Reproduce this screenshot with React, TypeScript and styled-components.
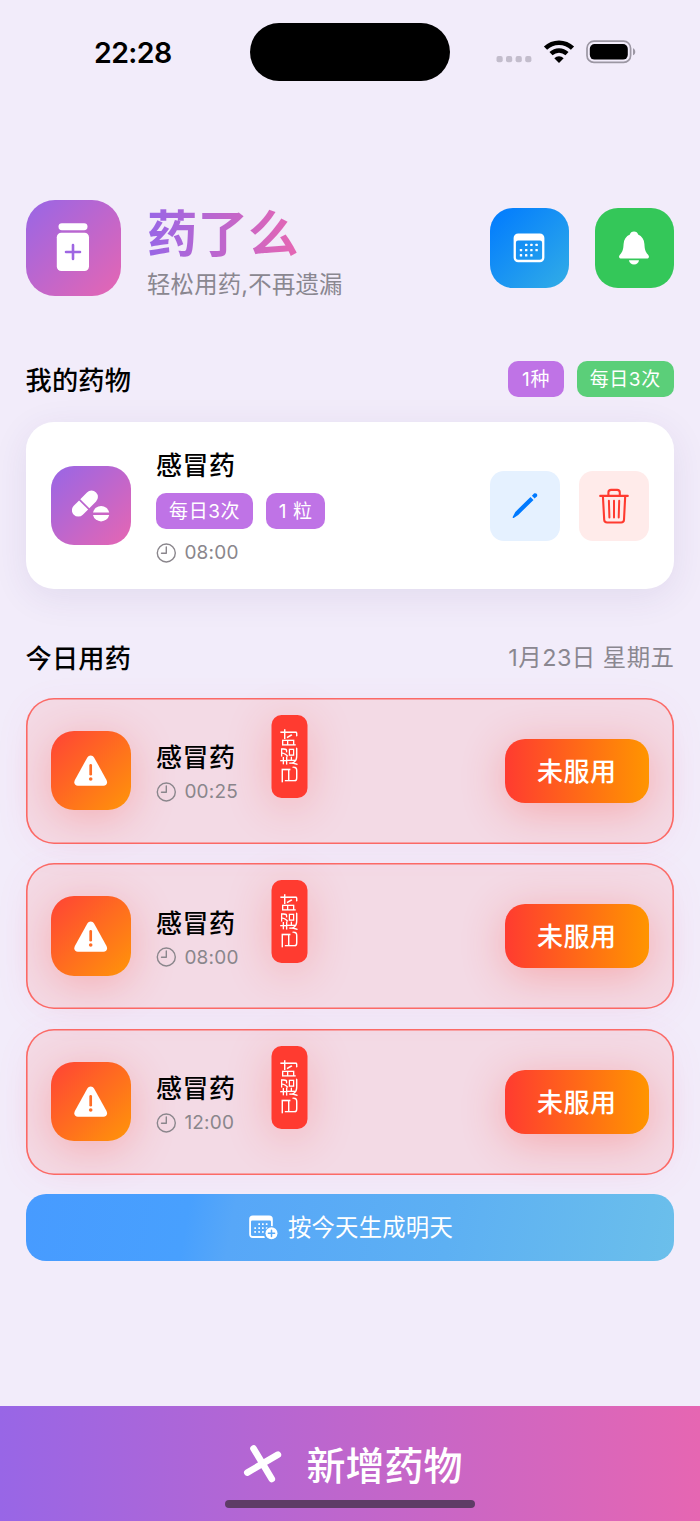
import React from 'react';
import styled, { createGlobalStyle, css } from 'styled-components';

const GlobalStyle = createGlobalStyle`
  *, *::before, *::after { box-sizing: border-box; }
  body {
    margin: 0;
    background: #f2ecfa;
    color: #000;
    font-family: Inter, "Noto Sans CJK SC", sans-serif;
    -webkit-font-smoothing: antialiased;
  }
  button { border: 0; padding: 0; margin: 0; font-family: inherit; color: inherit; background: none; }
  svg { display: block; flex: none; }
`;

const brandGradient = 'linear-gradient(135deg, #9866e6, #e666b2)';
const alertGradient = 'linear-gradient(135deg, #ff4336, #ff9509)';

const Screen = styled.div`
  display: flex;
  flex-direction: column;
  width: 700px;
  height: 1521px;
  overflow: hidden;
  background: #f2ecfa;
`;

const StatusBar = styled.header`
  display: grid;
  grid-template-columns: 250px 200px 250px;
  align-items: center;
  height: 58px;
  margin-top: 22.5px;
  flex: none;
`;

const Clock = styled.div`
  padding: 0 0 0 94px;
  font-size: 28.5px;
  font-weight: 600;
  line-height: 59px;
  letter-spacing: -0.6px;
`;

const Island = styled.div`
  height: 58px;
  border-radius: 29px;
  background: #000;
`;

const StatusIcons = styled.div`
  display: flex;
  align-items: center;
  padding-left: 46px;
`;

const Content = styled.main`
  display: flex;
  flex-direction: column;
  flex: 1;
  padding: 119.5px 26px 0 25.5px;
`;

const Header = styled.div`
  display: flex;
  align-items: center;
  height: 95.5px;
`;

const IconTile = styled.div<{ $size: number; $radius: number; $bg: string; $glow?: boolean }>`
  display: flex;
  align-items: center;
  justify-content: center;
  flex: none;
  width: ${(p) => p.$size}px;
  height: ${(p) => p.$size}px;
  border-radius: ${(p) => p.$radius}px;
  background: ${(p) => p.$bg};
  ${(p) => p.$glow && css`box-shadow: 0 8px 44px rgba(255, 59, 48, 0.28);`}
`;

const Brand = styled.div`
  margin-left: 26px;
  padding-top: 11px;
  flex: 1;
`;

const AppName = styled.h1`
  width: max-content;
  margin: 0;
  font-size: 50.5px;
  font-weight: 700;
  line-height: 60px;
  background: linear-gradient(90deg, #9866e6, #e666b2);
  background-clip: text;
  -webkit-background-clip: text;
  color: transparent;
`;

const Tagline = styled.p`
  margin: 4px 0 0;
  font-size: 23.4px;
  line-height: 34px;
  letter-spacing: 0.2px;
  color: #8a8790;
`;

const HeaderActions = styled.div`
  display: flex;
  gap: 25.5px;
`;

const SectionHead = styled.div<{ $top: number }>`
  display: flex;
  align-items: center;
  justify-content: space-between;
  height: 36px;
  margin-top: ${(p) => p.$top}px;
`;

const SectionTitle = styled.h2`
  margin: 0;
  padding-top: 3px;
  font-size: 26.2px;
  font-weight: 500;
  line-height: 36px;
  letter-spacing: 0.2px;
`;

const DateLabel = styled.span`
  margin-right: -0.5px;
  padding-top: 2px;
  font-size: 23.4px;
  line-height: 36px;
  letter-spacing: 0.5px;
  color: #8a8790;
`;

const TagRow = styled.div<{ $top?: number }>`
  display: flex;
  gap: 12.7px;
  margin: ${(p) => p.$top ?? 0}px 0 0 0;
`;

const Tag = styled.span<{ $tone?: 'green'; $width: number }>`
  display: flex;
  align-items: center;
  justify-content: center;
  width: ${(p) => p.$width}px;
  height: 35.5px;
  padding-top: 2px;
  border-radius: 10px;
  background: ${(p) => (p.$tone === 'green' ? '#5bcf79' : '#bf73e6')};
  color: #fff;
  font-size: 19px;
  letter-spacing: 0.6px;
  line-height: 36px;
  white-space: nowrap;
`;

const MedicineCard = styled.article`
  display: flex;
  align-items: center;
  height: 167px;
  margin-top: 25px;
  padding: 0 25.5px;
  border-radius: 28px;
  background: #fff;
  box-shadow: 0 8px 36px rgba(70, 40, 120, 0.09);
`;

const Details = styled.div`
  display: flex;
  flex-direction: column;
  margin-left: 25.4px;
`;

const DoseDetails = styled(Details)`
  width: 82px;
  padding-top: 2px;
`;

const MedicineName = styled.h3`
  margin: 0;
  font-size: 26px;
  font-weight: 500;
  line-height: 37px;
  letter-spacing: 0.6px;
  white-space: nowrap;
`;

const TimeRow = styled.div<{ $top: number }>`
  display: flex;
  align-items: center;
  gap: 8.5px;
  height: 24px;
  margin-top: ${(p) => p.$top}px;
  font-size: 19px;
  letter-spacing: 0.2px;
  color: #8a868c;
`;

const CardActions = styled.div`
  display: flex;
  gap: 19px;
  margin-left: auto;
`;

const SquareButton = styled.button<{ $bg: string }>`
  display: flex;
  align-items: center;
  justify-content: center;
  width: 70px;
  height: 70px;
  border-radius: 14px;
  background: ${(p) => p.$bg};
`;

const DoseList = styled.div`
  display: flex;
  flex-direction: column;
  gap: 19.5px;
  margin-top: 22.5px;
`;

const DoseCard = styled.article`
  display: flex;
  align-items: center;
  height: 146px;
  padding: 0 25px 0 25.5px;
  border-radius: 28px;
  background: rgba(255, 59, 48, 0.1);
  box-shadow:
    inset 0 0 0 1.6px rgba(255, 59, 48, 0.7),
    0 6px 36px rgba(240, 90, 150, 0.06);
`;

const OverdueBadge = styled.div`
  display: flex;
  align-items: center;
  justify-content: center;
  align-self: flex-start;
  flex: none;
  width: 35.5px;
  height: 83px;
  margin: 17px 0 0 34.6px;
  border-radius: 10px;
  background: #ff3b30;
  box-shadow: 0 -8px 44px rgba(255, 59, 48, 0.26);
  color: #fff;
  font-size: 18.5px;
  line-height: 35px;
  writing-mode: vertical-rl;
  text-orientation: sideways;
  transform: rotate(180deg);
`;

const TakeButton = styled.button`
  width: 144.5px;
  height: 64px;
  margin-left: auto;
  padding-top: 2px;
  border-radius: 20px;
  background: linear-gradient(90deg, #ff3b30, #ff9500);
  box-shadow: 0 8px 44px rgba(255, 59, 48, 0.3);
  color: #fff;
  font-size: 26px;
  font-weight: 500;
  line-height: 62px;
  letter-spacing: 0.5px;
`;

const GenerateButton = styled.button`
  display: flex;
  align-items: center;
  justify-content: center;
  gap: 10px;
  height: 67px;
  margin-top: 19px;
  padding: 1px 0 0 2.5px;
  border-radius: 20px;
  background: linear-gradient(100deg, #479bff 0%, #48a0fe 25%, #57a7f8 32%, #5db0f3 65%, #6bbfeb 100%);
  color: #fff;
  font-size: 23.4px;
  line-height: 67px;
  letter-spacing: 0.2px;
`;

const BottomBar = styled.footer`
  display: flex;
  flex-direction: column;
  align-items: center;
  height: 115px;
  flex: none;
  background: linear-gradient(90deg, #9866e6, #e666b2);
`;

const AddButton = styled.button`
  display: flex;
  align-items: center;
  gap: 24px;
  height: 94px;
  padding: 20px 0 0 6px;
  color: #fff;
  font-size: 39px;
  font-weight: 500;
`;

const HomeIndicator = styled.div`
  width: 250px;
  height: 8px;
  border-radius: 4px;
  background: #5e3c66;
`;

const DotsSvg = styled.svg`
  margin-top: 14px;
`;

const WifiSvg = styled.svg`
  margin-left: 10.5px;
`;

const BatterySvg = styled.svg`
  margin-left: 11px;
`;

const SignalDots = () => (
  <DotsSvg width="36" height="8" viewBox="0 0 36 8" fill="#c3bdcc">
    {[0.5, 10, 19.6, 29.2].map((x) => (
      <rect key={x} x={x} y="1" width="6.2" height="6.2" rx="2" />
    ))}
  </DotsSvg>
);

const WifiIcon = () => (
  <WifiSvg width="32" height="24" viewBox="0 0 32 24" fill="none">
    <path d="M2.5 8.2C10 .9 22 .9 29.5 8.2" stroke="#000" strokeWidth="4.6" />
    <path d="M8 13.7C12.7 9.3 19.3 9.3 24 13.7" stroke="#000" strokeWidth="4.5" />
    <path d="M11.3 18.3C14 15.6 18 15.6 20.7 18.3L16 23Z" fill="#000" />
  </WifiSvg>
);

const BatteryIcon = () => (
  <BatterySvg width="50" height="24" viewBox="0 0 50 24">
    <rect x="1" y="1.2" width="43.6" height="21.2" rx="7" fill="none" stroke="#9c97a3" strokeWidth="1.7" />
    <rect x="3.8" y="4" width="38" height="15.6" rx="4.8" fill="#000" />
    <path d="M47 8.2C50 9.2 50 14.3 47 15.3Z" fill="#9c97a3" />
  </BatterySvg>
);

const BottleIcon = () => (
  <svg width="34" height="50" viewBox="0 0 34 50">
    <rect x="2.5" y="0.2" width="29" height="7" rx="3.4" fill="#fff" />
    <rect x="0.8" y="9.8" width="32.2" height="38.2" rx="4.5" fill="#fff" />
    <path d="M17 22v14M10 29h14" stroke="#9e66e2" strokeWidth="2.6" strokeLinecap="round" />
  </svg>
);

const CalendarDots = () => (
  <g fill="#fff">
    {[
      [12, 10.7], [17.2, 10.7], [22.4, 10.7],
      [6.8, 15.9], [12, 15.9], [17.2, 15.9], [22.4, 15.9],
      [6.8, 21.1], [12, 21.1], [17.2, 21.1],
    ].map(([x, y]) => (
      <rect key={`${x}-${y}`} x={x} y={y} width="2.4" height="2.4" rx="0.6" />
    ))}
  </g>
);

const CalendarIcon = () => (
  <svg width="32" height="30" viewBox="0 0 32 30">
    <path
      fillRule="evenodd"
      fill="#fff"
      d="M5.2.5h21.6a4.6 4.6 0 0 1 4.6 4.6v19.6a4.6 4.6 0 0 1-4.6 4.6H5.2a4.6 4.6 0 0 1-4.6-4.6V5.1A4.6 4.6 0 0 1 5.2.5ZM5 7.6a2.1 2.1 0 0 0-2.1 2.1v15A2.1 2.1 0 0 0 5 26.8h22a2.1 2.1 0 0 0 2.1-2.1v-15A2.1 2.1 0 0 0 27 7.6Z"
    />
    <CalendarDots />
  </svg>
);

const BellIcon = () => (
  <svg width="30" height="34" viewBox="0 0 30 34" fill="#fff">
    <path d="M15 .6c2.2 0 3.7 1.3 4.1 2.8 3.9 1.5 6 5 6.3 9.6.3 5.2.8 7.4 3.5 10.6.9 1.1 1.1 1.7 1 2.3-.2 1-1 1.500-2.200 1.500H2.300c-1.200 0-2-.5-2.200-1.500-.1-.6.1-1.200 1-2.300 2.700-3.200 3.200-5.400 3.500-10.600.3-4.600 2.400-8.100 6.300-9.600C11.300 1.900 12.800.6 15 .6Z" />
    <path d="M10 29.3h10c-.3 2.5-2.2 4.3-5 4.3s-4.7-1.8-5-4.3Z" />
  </svg>
);

const PillsIcon = () => (
  <svg width="38" height="34" viewBox="0 0 38 34">
    <g transform="rotate(-45 13.5 14)" fill="#fff">
      <path d="M12.5 7.6H5A6.4 6.4 0 0 0 5 20.4h7.5Z" transform="translate(-1.7 0)" />
      <path d="M12.5 7.6H22a6.4 6.4 0 0 1 0 12.8h-9.5Z" />
    </g>
    <path d="M21 23.5a8.3 8.3 0 0 1 16.2 0Z" fill="#fff" />
    <path d="M21 25.9a8.3 8.3 0 0 0 16.2 0Z" fill="#fff" />
  </svg>
);

const ClockIcon = () => (
  <svg width="20" height="20" viewBox="0 0 20 20" fill="none" stroke="#8a868c" strokeWidth="1.4" strokeLinecap="round" strokeLinejoin="round">
    <circle cx="10.3" cy="10" r="9" />
    <path d="M10.3 4v6.3H5.5" />
  </svg>
);

const PencilIcon = () => (
  <svg width="26" height="27" viewBox="0 0 26 27" fill="#007aff">
    <path d="M18.5 4.9 21.5 7.9 6.2 23 1.7 25.9C1 26.3.3 25.6.7 24.9L3.3 19.9Z" />
    <path d="M19.9 3.7 22 1.6C23.9.2 26.3 2.5 24.8 4.4L22.6 6.4Z" />
  </svg>
);

const TrashIcon = () => (
  <svg width="30" height="36" viewBox="0 0 30 36" fill="none" stroke="#ff3b30" strokeWidth="2.100" strokeLinecap="round" strokeLinejoin="round">
    <path d="M1.2 7.9h27.6" />
    <path d="M9.4 7.6V4.6c0-1.7 1-2.7 2.7-2.7h6c1.7 0 2.7 1 2.7 2.7v3" />
    <path d="M3.9 8.1 5.2 31.7c.1 1.8 1.2 2.8 2.9 2.8h14c1.7 0 2.8-1 2.9-2.8L26.2 8.1" />
    <path d="M9.9 12.7l.5 16.800M15 12.7v16.800M20.2 12.7l-.5 16.800" strokeWidth="2" />
  </svg>
);

const WarningIcon = () => (
  <svg width="34" height="31" viewBox="0 0 34 31">
    <path d="M13.2 2.7C15-.2 18.400-.2 20.200 2.700L32.500 24.900C34 27.900 32.400 30.700 29.500 30.700H3.900C1 30.700-.6 27.900.9 24.900Z" fill="#fff" />
    <path d="M16.700 10.400v8.800" stroke="#ff6d26" strokeWidth="2.700" strokeLinecap="round" />
    <circle cx="16.700" cy="24" r="1.800" fill="#ff6d26" />
  </svg>
);

const CalendarPlusIcon = () => (
  <svg width="29" height="25" viewBox="0 0 29 25">
    <path
      fill="#fff"
      d="M3.800.4h16.400a3.600 3.600 0 0 1 3.600 3.600v7.300c-.6-.1-1.200-.1-1.800 0V6.800A1.300 1.300 0 0 0 20.700 5.500H3.300A1.300 1.300 0 0 0 2 6.800v12.900A1.500 1.500 0 0 0 3.500 21.100h11.800c.1.700.3 1.300.6 1.800H3.800A3.600 3.600 0 0 1 .2 19.300V4A3.600 3.600 0 0 1 3.800.4Z"
    />
    <g fill="#fff">
      {[
        [9.3, 8.3], [13, 8.3], [16.8, 8.3],
        [5.3, 12.2], [9.3, 12.2], [13, 12.2], [16.8, 12.2],
        [5.3, 16.1], [9.3, 16.1], [13, 16.1],
      ].map(([x, y]) => (
        <rect key={`${x}-${y}`} x={x} y={y} width="1.7" height="1.7" rx="0.3" />
      ))}
    </g>
    <circle cx="22.5" cy="18.3" r="6.8" fill="#57a9f7" />
    <circle cx="22.5" cy="18.3" r="6" fill="#fff" />
    <path d="M22.5 15.2v6.2M19.4 18.3h6.2" stroke="#57a9f7" strokeWidth="1.5" strokeLinecap="round" />
  </svg>
);

const TiltedPlusIcon = () => (
  <svg width="39" height="39" viewBox="0 0 39 39" stroke="#fff" strokeWidth="6.6" strokeLinecap="round">
    <path d="M10.500 4.500 28.800 35M4.300 28.600 34.900 10.700" />
  </svg>
);

const doses = ['00:25', '08:00', '12:00'];

export default function App() {
  return (
    <>
      <GlobalStyle />
      <Screen>
        <StatusBar>
          <Clock>22:28</Clock>
          <Island />
          <StatusIcons>
            <SignalDots />
            <WifiIcon />
            <BatteryIcon />
          </StatusIcons>
        </StatusBar>
        <Content>
          <Header>
            <IconTile $size={95.5} $radius={29} $bg={brandGradient}>
              <BottleIcon />
            </IconTile>
            <Brand>
              <AppName>药了么</AppName>
              <Tagline>轻松用药,不再遗漏</Tagline>
            </Brand>
            <HeaderActions>
              <IconTile as="button" $size={79.5} $radius={23} $bg="linear-gradient(135deg, #007aff, #32ade6)">
                <CalendarIcon />
              </IconTile>
              <IconTile as="button" $size={79.5} $radius={23} $bg="#34c759">
                <BellIcon />
              </IconTile>
            </HeaderActions>
          </Header>

          <SectionHead $top={65.5}>
            <SectionTitle>我的药物</SectionTitle>
            <TagRow>
              <Tag $width={55.5}>1种</Tag>
              <Tag $tone="green" $width={97.5}>每日3次</Tag>
            </TagRow>
          </SectionHead>

          <MedicineCard>
            <IconTile $size={79.5} $radius={23} $bg={brandGradient}>
              <PillsIcon />
            </IconTile>
            <Details>
              <MedicineName>感冒药</MedicineName>
              <TagRow $top={9.5}>
                <Tag $width={97.5}>每日3次</Tag>
                <Tag $width={59}>1 粒</Tag>
              </TagRow>
              <TimeRow $top={12}>
                <ClockIcon />
                08:00
              </TimeRow>
            </Details>
            <CardActions>
              <SquareButton $bg="#e5f1ff">
                <PencilIcon />
              </SquareButton>
              <SquareButton $bg="#ffebea">
                <TrashIcon />
              </SquareButton>
            </CardActions>
          </MedicineCard>

          <SectionHead $top={50}>
            <SectionTitle>今日用药</SectionTitle>
            <DateLabel>1月23日 星期五</DateLabel>
          </SectionHead>

          <DoseList>
            {doses.map((time) => (
              <DoseCard key={time}>
                <IconTile $size={79.5} $radius={23} $bg={alertGradient} $glow>
                  <WarningIcon />
                </IconTile>
                <DoseDetails>
                  <MedicineName>感冒药</MedicineName>
                  <TimeRow $top={3.5}>
                    <ClockIcon />
                    {time}
                  </TimeRow>
                </DoseDetails>
                <OverdueBadge>已超时</OverdueBadge>
                <TakeButton>未服用</TakeButton>
              </DoseCard>
            ))}
          </DoseList>

          <GenerateButton>
            <CalendarPlusIcon />
            按今天生成明天
          </GenerateButton>
        </Content>
        <BottomBar>
          <AddButton>
            <TiltedPlusIcon />
            新增药物
          </AddButton>
          <HomeIndicator />
        </BottomBar>
      </Screen>
    </>
  );
}
